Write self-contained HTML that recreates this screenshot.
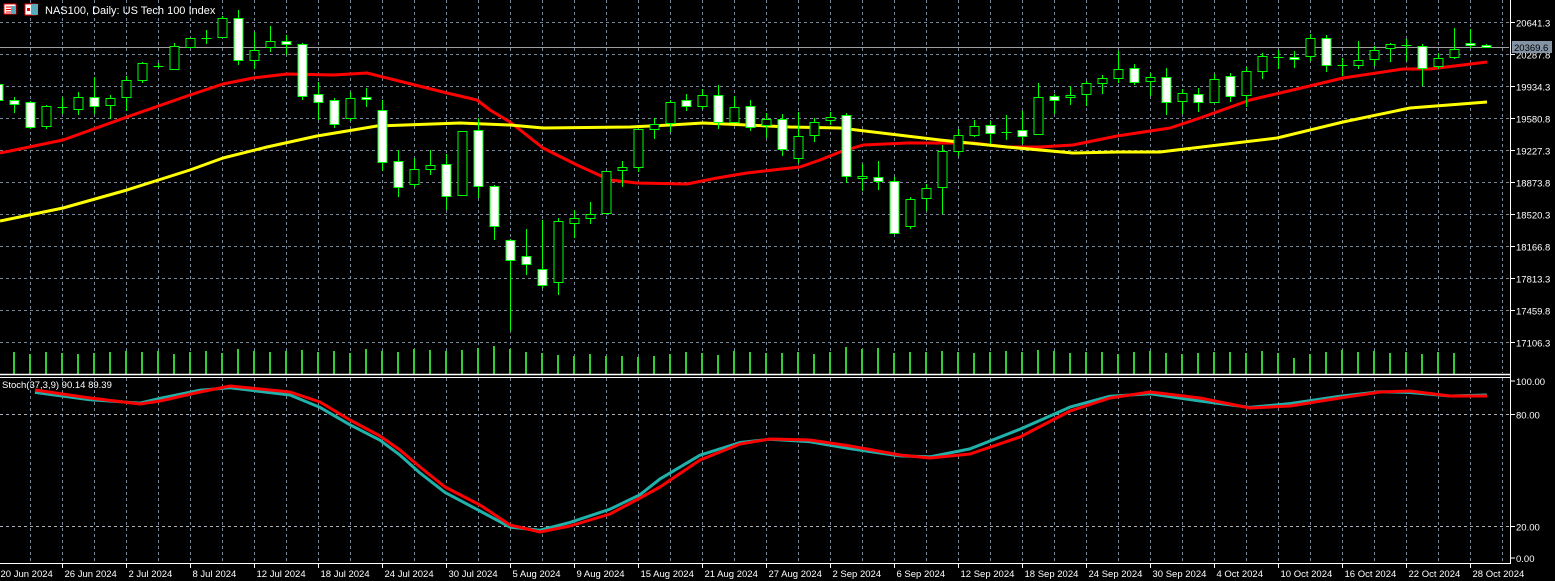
<!DOCTYPE html>
<html><head><meta charset="utf-8"><style>
html,body{margin:0;padding:0;background:#000;width:1555px;height:581px;overflow:hidden}
svg{display:block}
text{font-family:"Liberation Sans",sans-serif;font-size:9.5px;fill:#fff}
</style></head><body>
<svg id="s" width="1555" height="581" xmlns="http://www.w3.org/2000/svg"></svg>
<script>
var s=document.getElementById('s'),h='';
function L(x1,y1,x2,y2,c,w,d){h+='<line x1="'+x1+'" y1="'+y1+'" x2="'+x2+'" y2="'+y2+'" stroke="'+c+'" stroke-width="'+(w||1)+'"'+(d?' stroke-dasharray="'+d+'"':'')+'/>';}
function T(x,y,t,a){h+='<text x="'+x+'" y="'+y+'"'+(a||'')+'>'+t+'</text>';}
var G='#778899';
for(var x=30.5;x<1510;x+=32){L(x,0,x,373,G,1,'3,3');L(x,378,x,562,G,1,'3,3');}
for(var k=0;k<11;k++){var y=22.5+32*k;L(0,y,1509,y,G,1,'3,3');}
L(0,414.5,1509,414.5,'#aab0b8',1,'3,3');L(0,526.5,1509,526.5,'#aab0b8',1,'3,3');
L(0,47.5,1509,47.5,'#a0a0a0',1);
var vt=[352,354,352,353,354,353,352,351,352,351,354,352,351,353,349,351,352,351,350,352,351,353,349,351,352,349,350,351,350,348,346,349,352,353,355,356,354,356,356,357,356,354,352,353,355,351,352,353,353,352,354,352,347,349,348,353,352,352,351,352,353,352,351,352,350,351,353,352,352,354,352,351,353,354,353,352,352,353,351,353,358,354,352,350,352,351,353,352,354,352,353];
for(var i=0;i<vt.length;i++){var c=14+16*i;if(c>1480)break;h+='<rect x="'+(c-1)+'" y="'+vt[i]+'" width="2" height="'+(374-vt[i])+'" fill="#32cd32"/>';}
function P(pts,c,w){h+='<polyline fill="none" stroke="'+c+'" stroke-width="'+w+'" stroke-linejoin="round" points="'+pts+'"/>';}
P('0,153 63,140 127,117 190,95 223,84 253,78 287,74 333,75 367,73 403,82 447,93 477,100 490,110 510,122 543,148 577,165 610,180 637,183 687,184 717,178 747,173 773,170 800,167 820,160 840,152 863,145 907,143 973,143 1007,147 1040,147 1073,145 1117,136 1170,128 1200,118 1250,100 1297,89 1343,78 1403,69 1430,69 1487,62','#ff0000',3);
P('0,221 63,208 127,190 190,170 223,158 267,147 317,136 377,126 460,123 510,125 543,128 630,127 670,125 703,123 747,125 790,127 840,128 890,134 940,140 1007,147 1073,153 1117,152 1160,152 1210,146 1277,138 1343,122 1410,108 1487,102','#ffff00',3);
var C=[[84,84,100,102,1],[97,100,104,113,1],[101,102,127,129,1],[105,106,126,129,0],[97,107,107,114,2],[92,97,109,115,0],[77,97,106,114,1],[95,98,105,119,0],[76,80,97,111,0],[62,63,80,83,0],[63,66,66,68,2],[43,46,69,69,0],[38,38,47,47,0],[30,38,38,44,2],[16,18,37,37,0],[10,18,60,65,1],[32,50,60,69,0],[26,41,47,52,0],[35,41,44,55,1],[43,44,96,100,1],[82,94,102,120,1],[98,100,124,128,1],[92,98,118,121,0],[88,97,99,107,1],[100,110,162,171,1],[150,161,187,197,1],[158,169,184,187,0],[150,165,169,175,0],[154,164,196,210,1],[131,131,195,196,0],[118,130,186,198,1],[185,186,226,240,1],[239,240,260,331,1],[229,256,264,275,1],[220,269,285,288,1],[218,221,282,295,0],[210,218,223,238,0],[202,214,218,224,0],[171,171,213,214,0],[161,167,170,187,0],[129,129,167,172,0],[118,124,129,139,0],[100,102,123,132,0],[94,100,106,111,1],[89,95,106,109,0],[85,95,122,129,1],[96,107,122,123,0],[100,106,127,131,1],[113,119,125,138,0],[114,119,149,156,1],[112,136,158,163,0],[118,122,135,142,0],[112,117,120,125,0],[113,115,176,183,1],[164,176,178,191,0],[161,177,181,190,1],[177,181,233,234,1],[197,199,226,229,0],[184,188,198,211,0],[145,151,187,214,0],[129,135,151,156,0],[120,126,135,137,0],[121,125,133,144,1],[115,132,132,140,2],[111,130,136,144,1],[83,97,134,135,0],[94,96,100,114,1],[86,95,97,105,0],[81,83,94,106,0],[75,78,83,94,0],[51,69,78,83,0],[64,68,82,85,1],[73,77,81,96,0],[68,77,102,115,1],[89,93,101,114,0],[88,94,102,112,1],[74,79,102,103,0],[73,76,96,102,1],[67,71,95,107,0],[53,56,71,79,0],[50,57,57,69,2],[51,57,59,68,1],[34,38,56,61,0],[35,38,65,72,1],[58,65,65,76,2],[41,60,65,69,0],[46,50,59,66,0],[43,44,48,62,0],[39,45,45,61,2],[44,46,68,86,1],[53,58,66,69,0],[28,49,57,59,0],[29,43,45,48,1],[44,45,47,47,1]];
for(var i=0;i<C.length;i++){var c=14+16*(i-1)+0.5,d=C[i];
L(c,d[0],c,d[3],'#00ff00',1);
if(d[4]==2){L(c-5,d[1]+0.5,c+5,d[1]+0.5,'#00ff00',1);}
else{var t=d[1]+0.5,b=d[2]+0.5;if(b-t<2)b=t+2;h+='<rect x="'+(c-4.5)+'" y="'+t+'" width="9" height="'+(b-t)+'" fill="'+(d[4]?'#fff':'#000')+'" stroke="#00ff00" stroke-width="1"/>';}}
var sp=[[35,390],[90,398],[140,404],[160,401],[200,392],[230,386],[290,392],[320,402],[350,420],[380,436],[400,450],[420,467],[445,487],[480,505],[510,525],[540,532],[570,526],[610,514],[640,498],[660,487],[700,460],[740,444],[770,439],[810,440],[850,446],[900,455],[930,458],[970,454],[1020,437],[1070,411],[1110,398],[1150,392],[1200,398],[1250,408],[1290,406],[1340,398],[1380,392],[1410,391],[1450,396],[1487,396]];
var tp=sp.map(function(p,i){var q=sp[Math.min(i+1,sp.length-1)];return [p[0],p[1]+(q[1]-p[1])*0.3];});
tp[tp.length-1]=[1487,395];
P(tp.map(function(p){return p.join(',')}).join(' '),'#20b2aa',3);
P(sp.map(function(p){return p.join(',')}).join(' '),'#ff0000',3);
L(0,374.5,1510,374.5,'#fff',1.5);L(0,377.5,1510,377.5,'#fff',1);
L(1510.5,0,1510.5,563,'#fff',1);L(0,563.5,1511,563.5,'#fff',1);
var pl=['20641.3','20287.8','19934.3','19580.8','19227.3','18873.8','18520.3','18166.8','17813.3','17459.8','17106.3'];
for(var k=0;k<11;k++){var y=22.5+32*k;L(1510,y,1515,y,'#fff',1);T(1516,y+4,pl[k]);}
h+='<rect x="1512" y="41" width="40" height="12" fill="#8494a4"/>';T(1514,51,'20369.6',' style="fill:#000"');
var sl=[[381,'100.00'],[414.5,'80.00'],[526.5,'20.00'],[558,'0.00']];
sl.forEach(function(a){L(1510,a[0],1515,a[0],'#fff',1);T(1516,a[0]+4,a[1]);});
var ds=['20 Jun 2024','26 Jun 2024','2 Jul 2024','8 Jul 2024','12 Jul 2024','18 Jul 2024','24 Jul 2024','30 Jul 2024','5 Aug 2024','9 Aug 2024','15 Aug 2024','21 Aug 2024','27 Aug 2024','2 Sep 2024','6 Sep 2024','12 Sep 2024','18 Sep 2024','24 Sep 2024','30 Sep 2024','4 Oct 2024','10 Oct 2024','16 Oct 2024','22 Oct 2024','28 Oct 2024'];
ds.forEach(function(t,i){var x=-2+64*i+0.5;L(x,563,x,568,'#fff',1);T(x+2,577,t);});
h+='<rect x="4" y="4" width="12" height="10" fill="#fff" stroke="#e00" stroke-width="1"/><line x1="6" y1="7" x2="14" y2="7" stroke="#e00"/><line x1="6" y1="9.5" x2="14" y2="9.5" stroke="#e00"/><line x1="6" y1="12" x2="14" y2="12" stroke="#e00"/><rect x="11" y="6" width="5" height="8" fill="#5ab"/>';
h+='<rect x="25" y="4" width="11" height="11" fill="#fff" stroke="#e00"/><rect x="31" y="4" width="7" height="11" fill="#5ab"/><rect x="27" y="8" width="3" height="3" fill="#e00"/>';
T(45,14,'NAS100, Daily:  US Tech 100 Index',' style="font-size:11px"');
T(2,388,'Stoch(37,3,9) 90.14 89.39');
s.innerHTML=h;
</script>
</body></html>
